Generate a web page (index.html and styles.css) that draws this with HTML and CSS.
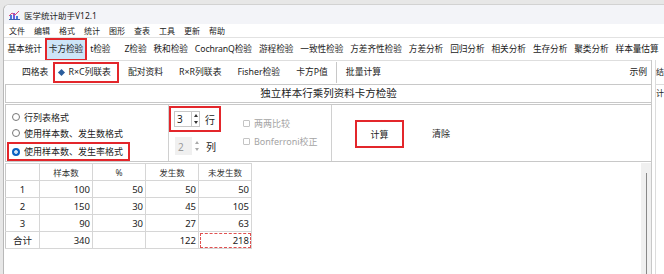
FILE: index.html
```html
<!DOCTYPE html>
<html lang="zh-CN">
<head>
    <meta charset="UTF-8">
    <title>医学统计助手V12.1</title>
    <link rel="stylesheet" href="styles.css">
</head>
<body>
    <div class="window">
        <div class="titlebar">
            <svg class="app-icon" width="11" height="10" viewBox="0 0 11 10">
                <rect x="1" y="5" width="2" height="5" fill="#4a7bd8"/>
                <rect x="4" y="3" width="2" height="7" fill="#6c5ce0"/>
                <rect x="7" y="6" width="2" height="4" fill="#4a7bd8"/>
                <polyline points="0,6 3,3 6,5 10,1" fill="none" stroke="#e0457b" stroke-width="1"/>
                <rect x="0" y="9" width="11" height="1" fill="#3a5fb0"/>
            </svg>
            <span>医学统计助手V12.1</span>
        </div>

        <div class="menubar">
            <span>文件</span><span>编辑</span><span>格式</span><span>统计</span><span>图形</span>
            <span>查表</span><span>工具</span><span>更新</span><span>帮助</span>
        </div>

        <div class="tabbar">
            <span class="tab">基本统计</span>
            <span class="tab active">卡方检验</span>
            <span class="tab wide">t检验</span>
            <span class="tab">Z检验</span>
            <span class="tab">秩和检验</span>
            <span class="tab">CochranQ检验</span>
            <span class="tab">游程检验</span>
            <span class="tab">一致性检验</span>
            <span class="tab">方差齐性检验</span>
            <span class="tab">方差分析</span>
            <span class="tab">回归分析</span>
            <span class="tab">相关分析</span>
            <span class="tab">生存分析</span>
            <span class="tab">聚类分析</span>
            <span class="tab">样本量估算</span>
        </div>

        <div class="body">
            <div class="workspace">
                <div class="subtabs">
                    <span class="subtab">四格表</span>
                    <span class="subtab active"><span class="diamond"></span>R×C列联表</span>
                    <span class="subtab">配对资料</span>
                    <span class="subtab">R×R列联表</span>
                    <span class="subtab">Fisher检验</span>
                    <span class="subtab">卡方P值</span>
                    <span class="subtab batch">批量计算</span>
                    <span class="subtab example">示例</span>
                </div>

                <div class="caption">独立样本行乘列资料卡方检验</div>

                <div class="options">
                    <div class="radios">
                        <label class="radio"><span class="dot"></span>行列表格式</label>
                        <label class="radio"><span class="dot"></span>使用样本数、发生数格式</label>
                        <label class="radio checked"><span class="dot"></span>使用样本数、发生率格式</label>
                    </div>
                    <div class="spins">
                        <div class="spin-col">
                            <div class="spin marked">
                                <span class="spin-box">3</span>
                                <span class="spin-arrows"><span class="up"></span><span class="down"></span></span>
                                <span class="spin-label">行</span>
                            </div>
                            <div class="spin disabled">
                                <span class="spin-box">2</span>
                                <span class="spin-arrows"><span class="up"></span><span class="down"></span></span>
                                <span class="spin-label">列</span>
                            </div>
                        </div>
                        <div class="checks">
                            <label class="check"><span class="box"></span>两两比较</label>
                            <label class="check"><span class="box"></span>Bonferroni校正</label>
                        </div>
                    </div>
                    <div class="actions">
                        <button class="btn marked">计算</button>
                        <button class="btn flat">清除</button>
                    </div>
                </div>

                <div class="grid-area">
                    <table class="grid">
                        <tr class="head">
                            <th></th><th>样本数</th><th>%</th><th>发生数</th><th>未发生数</th>
                        </tr>
                        <tr><th>1</th><td>100</td><td>50</td><td>50</td><td>50</td></tr>
                        <tr><th>2</th><td>150</td><td>30</td><td>45</td><td>105</td></tr>
                        <tr><th>3</th><td>90</td><td>30</td><td>27</td><td>63</td></tr>
                        <tr><th>合计</th><td>340</td><td></td><td>122</td><td class="focus">218</td></tr>
                    </table>
                    <div class="scrollbar"><div class="thumb"></div></div>
                </div>
            </div>

            <div class="side">
                <div class="side-head">结</div>
                <div class="side-text">计</div>
            </div>
        </div>
    </div>
</body>
</html>
```

FILE: styles.css
```css
* {
    margin: 0;
    padding: 0;
    box-sizing: border-box;
}

body {
    font-family: "Noto Sans", "Noto Sans CJK SC", sans-serif;
    background: #e7e7e7;
    color: #222;
    height: 274px;
    overflow: hidden;
}

.window {
    margin: 4px 0 0 3px;
    height: 270px;
    background: #fff;
    border-left: 1px solid #b8b8b8;
    border-top: 1px solid #d2d2d2;
    border-top-left-radius: 6px;
    overflow: hidden;
}

.titlebar {
    display: flex;
    align-items: center;
    gap: 4px;
    height: 19px;
    padding-left: 5px;
    background: #f3f4f8;
    font-size: 8.5px;
    border-top-left-radius: 6px;
}

.menubar {
    display: flex;
    align-items: center;
    gap: 9px;
    height: 14px;
    padding-left: 5px;
    font-size: 8px;
    border-bottom: 1px solid #e2e2e2;
}

.tabbar {
    display: flex;
    align-items: center;
    height: 22px;
    padding-left: 0;
    font-size: 8.7px;
    letter-spacing: -0.1px;
    white-space: nowrap;
}

.tab {
    padding: 0 1.5px;
    line-height: 19px;
    border: 2px solid transparent;
}

.tab.active {
    background: #cde5f7;
    border-color: #e3262b;
}

.tab.wide {
    margin-right: 7px;
}

.body {
    display: flex;
    height: 214px;
}

.workspace {
    width: 648px;
    border-right: 1px solid #c8c8c8;
    display: flex;
    flex-direction: column;
}

.subtabs {
    display: flex;
    align-items: center;
    height: 24px;
    border-top: 1px solid #dedede;
    font-size: 8.8px;
    white-space: nowrap;
}

.subtab {
    padding: 0 8px;
    line-height: 17px;
}

.subtab:first-child {
    margin-left: 10px;
    padding-right: 5px;
}

.subtab.active {
    display: flex;
    align-items: center;
    gap: 4px;
    height: 21px;
    padding: 0 6px 0 4px;
    margin: 0 1px 0 0;
    border: 2px solid #e3262b;
}

.diamond {
    width: 5px;
    height: 5px;
    background: #2b5d9c;
    transform: rotate(45deg);
}

.subtab.batch {
    margin-left: 0;
    border-left: 1px solid #c8c8c8;
    padding-left: 9px;
    line-height: 21px;
}

.subtab.example {
    margin-left: auto;
    padding-right: 4px;
}

.caption {
    height: 19px;
    margin-left: 1px;
    border: 1px solid #c8c8c8;
    border-right: 0;
    text-align: center;
    font-size: 10.5px;
    line-height: 17px;
}

.options {
    display: flex;
    height: 58px;
    margin: 1px 0 0 1px;
    border: 1px solid #c8c8c8;
    border-right: 0;
    font-size: 9px;
    white-space: nowrap;
}

.radios {
    width: 162px;
    padding: 4px 0 0 1px;
    display: flex;
    flex-direction: column;
}

.radio {
    display: flex;
    align-items: center;
    gap: 4px;
    height: 16px;
    padding-left: 5px;
}

.radio.checked {
    height: 19px;
    width: 123px;
    border: 2px solid #e3262b;
    padding-left: 3px;
    margin-top: 1px;
}

.dot {
    width: 8px;
    height: 8px;
    border: 1px solid #777;
    border-radius: 50%;
}

.radio.checked .dot {
    border: 2px solid #0a62c2;
    background: #0a62c2;
    box-shadow: inset 0 0 0 1.5px #fff;
}

.spins {
    display: flex;
    width: 164px;
    border-left: 1px solid #d0d0d0;
    border-right: 1px solid #d0d0d0;
}

.spin-col {
    display: flex;
    flex-direction: column;
    padding-top: 1px;
    gap: 5px;
}

.spin {
    display: flex;
    align-items: center;
    height: 26px;
    padding-left: 5px;
}

.spin.marked {
    width: 52px;
    border: 2px solid #e3262b;
    padding-left: 3px;
}

.spin-box {
    width: 17px;
    height: 16px;
    border: 1px solid #c8c8c8;
    border-right: 0;
    padding-left: 2px;
    font-size: 10px;
    line-height: 14px;
}

.spin-arrows {
    display: flex;
    flex-direction: column;
    justify-content: space-around;
    align-items: center;
    width: 9px;
    height: 16px;
    border: 1px solid #c8c8c8;
}

.spin-arrows .up,
.spin-arrows .down {
    width: 0;
    height: 0;
    border-left: 2.5px solid transparent;
    border-right: 2.5px solid transparent;
}

.spin-arrows .up {
    border-bottom: 3px solid #333;
}

.spin-arrows .down {
    border-top: 3px solid #333;
}

.spin-label {
    margin-left: 5px;
    font-size: 10px;
}

.spin.disabled {
    height: 18px;
    padding-left: 6px;
}

.spin.disabled .spin-box {
    background: #f0f0f0;
    border-color: #f0f0f0;
    color: #9a9a9a;
    height: 18px;
    line-height: 18px;
}

.spin.disabled .spin-arrows {
    border-color: #fff;
}

.spin.disabled .up {
    border-bottom-color: #aaa;
}

.spin.disabled .down {
    border-top-color: #aaa;
}

.checks {
    display: flex;
    flex-direction: column;
    padding: 11px 0 0 22px;
    gap: 4px;
    color: #a4a4a4;
}

.check {
    display: flex;
    align-items: center;
    gap: 4px;
    height: 14px;
}

.box {
    width: 7px;
    height: 7px;
    border: 1px solid #c4c4c4;
    border-radius: 1px;
}

.actions {
    display: flex;
    align-items: center;
    padding: 0 0 0 23px;
    gap: 28px;
}

.btn {
    font-family: inherit;
    font-size: 9px;
    color: #222;
    background: #fff;
    border: 0;
}

.btn.marked {
    width: 49px;
    height: 28px;
    border: 2px solid #e3262b;
    margin-top: 2px;
}

.btn.flat {
    margin-top: 1px;
}

.grid-area {
    flex: 1;
    display: flex;
    margin-left: 1px;
    padding-top: 1px;
}

.grid {
    border-collapse: collapse;
    align-self: flex-start;
    font-size: 9.5px;
    margin-right: auto;
}

.grid th,
.grid td {
    border: 1px solid #d6d6d6;
    height: 17px;
    padding: 0 2px;
    font-weight: normal;
}

.grid th {
    width: 34px;
    text-align: center;
}

.grid td {
    width: 53px;
    text-align: right;
}

.grid .head th {
    width: 53px;
    font-size: 8.5px;
    color: #333;
}

.grid .head th:first-child {
    width: 34px;
}

.grid tr > :first-child {
    border-left-color: #c8c8c8;
}

.grid td.focus {
    outline: 1px dashed #e05050;
    outline-offset: -2px;
}

.scrollbar {
    width: 10px;
    background: #f0f0f0;
    display: flex;
    justify-content: center;
    padding-top: 10px;
}

.thumb {
    width: 1px;
    background: #888;
}

.side {
    flex: 1;
    margin-left: 3px;
    border-left: 1px solid #dcdcdc;
    font-size: 8px;
    overflow: hidden;
    white-space: nowrap;
}

.side-head {
    height: 25px;
    padding: 6px 0 0 0;
    border-bottom: 1px solid #dcdcdc;
}

.side-text {
    padding: 2px 0 0 0;
}
```
